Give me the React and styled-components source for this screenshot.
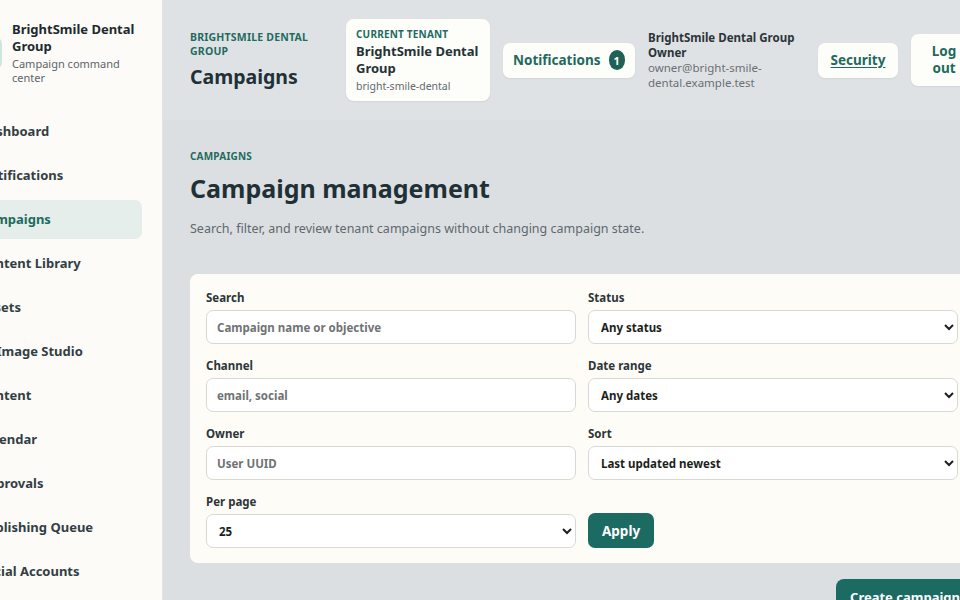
import styled, { createGlobalStyle } from "styled-components";

const GlobalStyle = createGlobalStyle`
  html, body {
    margin: 0;
    padding: 0;
    overflow: hidden;
    background: #dcdfe2;
  }

  * {
    box-sizing: border-box;
  }

  body {
    font-family: "Noto Sans", "Open Sans", sans-serif;
    color: #1f3136;
  }
`;

const Shell = styled.div`
  display: flex;
  width: 1060px;
  min-height: 600px;
  margin-left: -48px;
`;

const Sidebar = styled.aside`
  width: 211px;
  flex-shrink: 0;
  background: #fcfbf7;
  border-right: 1px solid #e4e4df;
  padding: 21px 20px 20px 16px;
  display: flex;
  flex-direction: column;
  gap: 27px;
`;

const Brand = styled.div`
  display: flex;
  align-items: center;
  gap: 10px;
`;

const BrandMark = styled.div`
  width: 34px;
  height: 34px;
  flex-shrink: 0;
  border-radius: 8px;
  background: #cfe6de;
`;

const BrandText = styled.div`
  display: flex;
  flex-direction: column;

  strong {
    font-size: 13px;
    line-height: 17px;
    font-weight: 700;
    color: #1d2a2f;
  }

  span {
    font-size: 11px;
    line-height: 14px;
    color: #5d6469;
    margin-top: 2px;
  }
`;

const Nav = styled.nav`
  display: flex;
  flex-direction: column;
  gap: 5px;
`;

const NavItem = styled.a`
  display: block;
  padding: 11px 14px 11px 11px;
  border-radius: 7px;
  font-size: 13px;
  line-height: 17px;
  font-weight: 700;
  white-space: nowrap;
  text-decoration: none;
  color: ${({ $active }) => ($active ? "#1e6a5e" : "#333e44")};
  background: ${({ $active }) => ($active ? "#e5eeea" : "transparent")};
`;

const Main = styled.main`
  flex: 1;
  display: flex;
  flex-direction: column;
`;

const TopBar = styled.header`
  display: flex;
  align-items: center;
  gap: 13px;
  padding: 19px 28px 19px 27px;
  background: #dfe2e5;
`;

const TitleBlock = styled.div`
  width: 143px;
  flex-shrink: 0;

  h1 {
    margin: 6px 0 0;
    font-size: 19.5px;
    line-height: 26px;
    font-weight: 700;
    color: #1f3136;
  }
`;

const Eyebrow = styled.div`
  font-size: ${({ $size }) => $size || "10.5px"};
  line-height: 14px;
  font-weight: 700;
  letter-spacing: 0.2px;
  text-transform: uppercase;
  color: #1f6b5f;
`;

const TenantCard = styled.div`
  width: 144px;
  flex-shrink: 0;
  background: #fdfdfa;
  border-radius: 8px;
  padding: 8px 10px 8px;
  box-shadow: 0 1px 2px rgba(0, 0, 0, 0.06);

  strong {
    display: block;
    margin-top: 2px;
    font-size: 13px;
    line-height: 17px;
    font-weight: 700;
    color: #253236;
  }

  small {
    display: block;
    margin-top: 2px;
    font-size: 10.5px;
    line-height: 14px;
    color: #626a6e;
  }
`;

const HeaderButton = styled.button`
  display: flex;
  align-items: center;
  justify-content: ${({ $align }) => $align || "center"};
  gap: 8px;
  flex-shrink: 0;
  width: ${({ $width }) => $width};
  height: ${({ $height }) => $height || "35px"};
  padding: 0 ${({ $pad }) => $pad || "10px"};
  border: none;
  border-radius: 7px;
  background: #fdfdfa;
  box-shadow: 0 1px 2px rgba(0, 0, 0, 0.06);
  font-family: inherit;
  font-size: 13.5px;
  line-height: 17px;
  font-weight: 700;
  text-align: center;
  color: #1e6a5e;
  text-decoration: ${({ $underline }) => ($underline ? "underline" : "none")};
  text-underline-offset: 2px;
`;

const Badge = styled.span`
  display: inline-flex;
  align-items: center;
  justify-content: center;
  width: 20px;
  height: 20px;
  border-radius: 50%;
  background: #1e6155;
  color: #fff;
  font-size: 11px;
  font-weight: 700;
`;

const UserInfo = styled.div`
  width: 157px;
  flex-shrink: 0;
  font-size: 11.5px;
  line-height: 15px;

  strong {
    display: block;
    font-weight: 700;
    color: #2b3438;
  }

  span {
    display: block;
    color: #6a7074;
    overflow-wrap: anywhere;
  }
`;

const Content = styled.section`
  padding: 29px 28px 0 27px;
  width: 839px;
`;

const PageTitle = styled.h2`
  margin: 8px 0 0;
  font-size: 25px;
  line-height: 35px;
  font-weight: 700;
  color: #1f3136;
`;

const Lead = styled.p`
  margin: 14px 0 0;
  font-size: 12.5px;
  line-height: 18px;
  color: #5e686e;
`;

const FilterCard = styled.form`
  margin-top: 36px;
  background: #fdfcf7;
  border-radius: 8px;
  padding: 16px 16px 15px;
  display: grid;
  grid-template-columns: 370px 370px;
  column-gap: 12px;
  row-gap: 14px;
  align-items: end;
`;

const Field = styled.label`
  display: flex;
  flex-direction: column;
  gap: 5px;

  span {
    font-size: 11.5px;
    line-height: 15px;
    font-weight: 700;
    color: #2d3538;
  }
`;

const controlStyles = `
  height: 34px;
  width: 100%;
  border: 1px solid #d9d9d3;
  border-radius: 7px;
  background: #ffffff;
  font-family: inherit;
  font-size: 11.5px;
  font-weight: 700;
  color: #1c1f21;
  padding: 0 10px;
  outline: none;
`;

const TextInput = styled.input`
  ${controlStyles}

  &::placeholder {
    color: #6f7375;
  }
`;

const Select = styled.select`
  ${controlStyles}
  padding: 0 8px;
`;

const ApplyButton = styled.button`
  justify-self: start;
  height: 35px;
  padding: 0 14px;
  border: none;
  border-radius: 7px;
  background: #1c6b62;
  color: #fff;
  font-family: inherit;
  font-size: 13.5px;
  font-weight: 700;
`;

const Actions = styled.div`
  display: flex;
  justify-content: flex-end;
  margin-top: 16px;
  width: 784px;
`;

const PrimaryButton = styled.button`
  height: 36px;
  padding: 0 14px;
  border: none;
  border-radius: 8px;
  background: #1c6b62;
  color: #fff;
  font-family: inherit;
  font-size: 13px;
  font-weight: 700;
`;

const navLinks = [
  "Dashboard",
  "Notifications",
  "Campaigns",
  "Content Library",
  "Assets",
  "AI Image Studio",
  "Content",
  "Calendar",
  "Approvals",
  "Publishing Queue",
  "Social Accounts",
];

const App = () => {
  return (
    <>
      <GlobalStyle />
      <Shell>
        <Sidebar>
          <Brand>
            <BrandMark />
            <BrandText>
              <strong>BrightSmile Dental Group</strong>
              <span>Campaign command center</span>
            </BrandText>
          </Brand>
          <Nav>
            {navLinks.map((link) => (
              <NavItem key={link} href="#" $active={link === "Campaigns"}>
                {link}
              </NavItem>
            ))}
          </Nav>
        </Sidebar>

        <Main>
          <TopBar>
            <TitleBlock>
              <Eyebrow>BrightSmile Dental Group</Eyebrow>
              <h1>Campaigns</h1>
            </TitleBlock>

            <TenantCard>
              <Eyebrow $size="10px">Current tenant</Eyebrow>
              <strong>BrightSmile Dental Group</strong>
              <small>bright-smile-dental</small>
            </TenantCard>

            <HeaderButton $width="132px" type="button">
              Notifications <Badge>1</Badge>
            </HeaderButton>

            <UserInfo>
              <strong>BrightSmile Dental Group</strong>
              <strong>Owner</strong>
              <span>owner@bright-smile-dental.example.test</span>
            </UserInfo>

            <HeaderButton $width="80px" $underline type="button">
              Security
            </HeaderButton>

            <HeaderButton
              $width="66px"
              $height="52px"
              $pad="18px"
              $align="flex-start"
              type="button"
            >
              Log out
            </HeaderButton>
          </TopBar>

          <Content>
            <Eyebrow $size="10px">Campaigns</Eyebrow>
            <PageTitle>Campaign management</PageTitle>
            <Lead>
              Search, filter, and review tenant campaigns without changing
              campaign state.
            </Lead>

            <FilterCard onSubmit={(e) => e.preventDefault()}>
              <Field>
                <span>Search</span>
                <TextInput placeholder="Campaign name or objective" />
              </Field>
              <Field>
                <span>Status</span>
                <Select defaultValue="any">
                  <option value="any">Any status</option>
                </Select>
              </Field>
              <Field>
                <span>Channel</span>
                <TextInput placeholder="email, social" />
              </Field>
              <Field>
                <span>Date range</span>
                <Select defaultValue="any">
                  <option value="any">Any dates</option>
                </Select>
              </Field>
              <Field>
                <span>Owner</span>
                <TextInput placeholder="User UUID" />
              </Field>
              <Field>
                <span>Sort</span>
                <Select defaultValue="updated_desc">
                  <option value="updated_desc">Last updated newest</option>
                </Select>
              </Field>
              <Field>
                <span>Per page</span>
                <Select defaultValue="25">
                  <option value="25">25</option>
                </Select>
              </Field>
              <ApplyButton type="submit">Apply</ApplyButton>
            </FilterCard>

            <Actions>
              <PrimaryButton type="button">Create campaign</PrimaryButton>
            </Actions>
          </Content>
        </Main>
      </Shell>
    </>
  );
};

export default App;
